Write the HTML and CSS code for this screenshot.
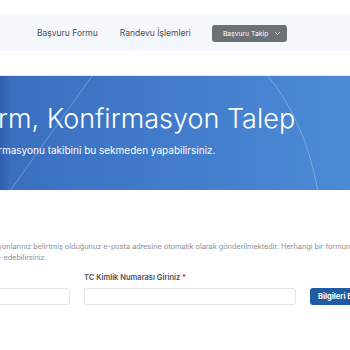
FILE: index.html
```html
<!DOCTYPE html>
<html lang="tr">
<head>
    <meta charset="UTF-8">
    <meta name="viewport" content="width=device-width, initial-scale=1.0">
    <title>Başvuru Takip</title>
    <link rel="stylesheet" href="styles.css">
</head>
<body>
    <!-- Top navigation -->
    <header class="topbar">
        <nav class="menu">
            <a href="#" class="menu-link">Başvuru Formu</a>
            <a href="#" class="menu-link">Randevu İşlemleri</a>
            <button class="menu-drop">Başvuru Takip
                <svg width="7" height="5" viewBox="0 0 7 5"><path d="M1.2 1.2l2.3 2.3 2.3-2.3" fill="none" stroke="#fff" stroke-width="0.9"/></svg>
            </button>
        </nav>
    </header>

    <!-- Hero banner -->
    <section class="hero">
        <svg class="hero-lines" width="350" height="115" viewBox="0 0 350 115">
            <path d="M92 0 L10 115" stroke="rgba(255,255,255,0.35)" stroke-width="0.8" fill="none"/>
            <path d="M268 0 Q305 45 318 115" stroke="rgba(255,255,255,0.35)" stroke-width="0.8" fill="none"/>
        </svg>
        <div class="hero-inner">
            <h1>rm, Konfirmasyon Talep</h1>
            <p>rmasyonu takibini bu sekmeden yapabilirsiniz.</p>
        </div>
    </section>

    <!-- Query form -->
    <main class="content">
        <p class="info">yonlarınız belirtmiş olduğunuz e-posta adresine otomatik olarak gönderilmektedir. Herhangi bir formun u<br>- edebilirsiniz.</p>
        <form class="query-form" onsubmit="return false">
            <div class="field">
                <label>&nbsp;</label>
                <input type="text" class="input input-short">
            </div>
            <div class="field">
                <label>TC Kimlik Numarası Giriniz <span class="req">*</span></label>
                <input type="text" class="input input-long">
            </div>
            <div class="field">
                <label>&nbsp;</label>
                <button class="submit-btn">Bilgileri Ekle</button>
            </div>
        </form>
    </main>
</body>
</html>
```

FILE: styles.css
```css
* {
    margin: 0;
    padding: 0;
    box-sizing: border-box;
}
body {
    font-family: Inter, 'Open Sans', sans-serif;
    background: #fff;
    color: #444;
    width: 350px;
    overflow: hidden;
}
/* Header */
.topbar {
    margin-top: 15px;
    height: 36px;
    background: #f4f8fc;
    display: flex;
    align-items: center;
}
.menu {
    display: flex;
    align-items: center;
    padding-left: 37px;
    gap: 22px;
}
.menu-link {
    font-size: 8.5px;
    color: #4a4f55;
    text-decoration: none;
}
.menu-drop {
    display: flex;
    align-items: center;
    justify-content: space-between;
    width: 75px;
    height: 17px;
    padding: 0 6px 0 11px;
    margin-left: -1px;
    background: #6c7178;
    color: #fff;
    font-family: inherit;
    font-size: 6.8px;
    border: none;
    border-radius: 3px;
}
/* Hero */
.hero {
    position: relative;
    margin-top: 24px;
    height: 115px;
    border-top: 1px solid #dcecf9;
    background: linear-gradient(90deg, #2f5fae 0, #3a6fbf 3%, #3f78c7 35%, #4c8ad6 100%);
    color: #fff;
    overflow: hidden;
}
.hero-lines {
    position: absolute;
    left: 0;
    top: 0;
}
.hero-inner {
    position: relative;
    margin-left: -2px;
    padding-top: 25px;
    white-space: nowrap;
}
.hero h1 {
    font-size: 27px;
    font-weight: 300;
    line-height: 36px;
}
.hero p {
    margin-top: 7px;
    font-size: 10px;
    font-weight: 400;
}
/* Content */
.content {
    padding-top: 51px;
    margin-left: -2px;
    white-space: nowrap;
}
.info {
    font-size: 7.3px;
    line-height: 11px;
    color: #8a8f95;
}
.query-form {
    display: flex;
    gap: 14px;
    margin-top: 10px;
    margin-left: -60px;
}
.field {
    display: flex;
    flex-direction: column;
    gap: 5px;
}
.field label {
    font-size: 7.5px;
    font-weight: 600;
    color: #4a4f55;
    line-height: 10px;
}
.req {
    color: #d0263a;
}
.input {
    height: 17px;
    border: 1px solid #e2e6ea;
    border-radius: 3px;
    background: #fff;
}
.input-short {
    width: 132px;
}
.input-long {
    width: 212px;
}
.submit-btn {
    height: 17px;
    width: 80px;
    padding: 0 8px;
    background: #1f5aa2;
    color: #fff;
    border: none;
    border-radius: 3px;
    font-family: inherit;
    font-size: 7.5px;
    font-weight: 700;
    text-align: left;
}
```
